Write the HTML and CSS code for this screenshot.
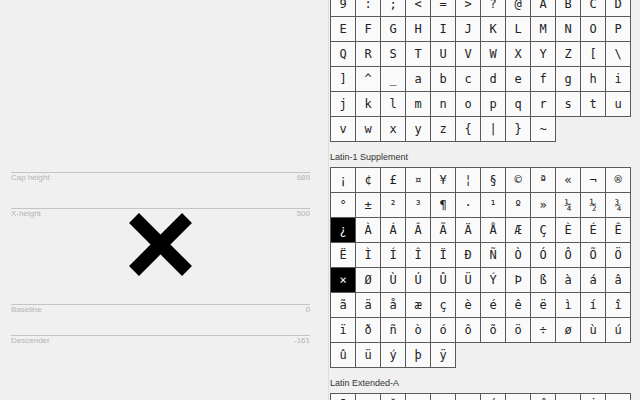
FILE: index.html
```html
<!DOCTYPE html>
<html>
<head>
<meta charset="utf-8">
<link rel="stylesheet" href="styles.css">
</head>
<body>
<div class="app">
  <div class="preview">
    <div class="metric cap"><span>Cap height</span><span>689</span></div>
    <div class="metric xh"><span>X-height</span><span>500</span></div>
    <div class="metric base"><span>Baseline</span><span>0</span></div>
    <div class="metric desc"><span>Descender</span><span>-161</span></div>
    <svg class="glyph" width="63" height="63" viewBox="0 0 63 63">
      <line x1="5" y1="5" x2="58" y2="58" stroke="#000" stroke-width="14"/>
      <line x1="58" y1="5" x2="5" y2="58" stroke="#000" stroke-width="14"/>
    </svg>
  </div>
  <div class="charset">
    <div class="grid first">
      <div class="c">9</div><div class="c">:</div><div class="c">;</div><div class="c">&lt;</div><div class="c">=</div><div class="c">&gt;</div><div class="c">?</div><div class="c">@</div><div class="c">A</div><div class="c">B</div><div class="c">C</div><div class="c">D</div>
      <div class="c">E</div><div class="c">F</div><div class="c">G</div><div class="c">H</div><div class="c">I</div><div class="c">J</div><div class="c">K</div><div class="c">L</div><div class="c">M</div><div class="c">N</div><div class="c">O</div><div class="c">P</div>
      <div class="c">Q</div><div class="c">R</div><div class="c">S</div><div class="c">T</div><div class="c">U</div><div class="c">V</div><div class="c">W</div><div class="c">X</div><div class="c">Y</div><div class="c">Z</div><div class="c">[</div><div class="c">\</div>
      <div class="c">]</div><div class="c">^</div><div class="c">_</div><div class="c">a</div><div class="c">b</div><div class="c">c</div><div class="c">d</div><div class="c">e</div><div class="c">f</div><div class="c">g</div><div class="c">h</div><div class="c">i</div>
      <div class="c">j</div><div class="c">k</div><div class="c">l</div><div class="c">m</div><div class="c">n</div><div class="c">o</div><div class="c">p</div><div class="c">q</div><div class="c">r</div><div class="c">s</div><div class="c">t</div><div class="c">u</div>
      <div class="c">v</div><div class="c">w</div><div class="c">x</div><div class="c">y</div><div class="c">z</div><div class="c">{</div><div class="c">|</div><div class="c">}</div><div class="c">~</div>
    </div>
    <div class="label">Latin-1 Supplement</div>
    <div class="grid">
      <div class="c">¡</div><div class="c">¢</div><div class="c">£</div><div class="c">¤</div><div class="c">¥</div><div class="c">¦</div><div class="c">§</div><div class="c">©</div><div class="c">ª</div><div class="c">«</div><div class="c">¬</div><div class="c">®</div>
      <div class="c">°</div><div class="c">±</div><div class="c">²</div><div class="c">³</div><div class="c">¶</div><div class="c">·</div><div class="c">¹</div><div class="c">º</div><div class="c">»</div><div class="c">¼</div><div class="c">½</div><div class="c">¾</div>
      <div class="c sel">¿</div><div class="c">À</div><div class="c">Á</div><div class="c">Â</div><div class="c">Ã</div><div class="c">Ä</div><div class="c">Å</div><div class="c">Æ</div><div class="c">Ç</div><div class="c">È</div><div class="c">É</div><div class="c">Ê</div>
      <div class="c">Ë</div><div class="c">Ì</div><div class="c">Í</div><div class="c">Î</div><div class="c">Ï</div><div class="c">Ð</div><div class="c">Ñ</div><div class="c">Ò</div><div class="c">Ó</div><div class="c">Ô</div><div class="c">Õ</div><div class="c">Ö</div>
      <div class="c sel">×</div><div class="c">Ø</div><div class="c">Ù</div><div class="c">Ú</div><div class="c">Û</div><div class="c">Ü</div><div class="c">Ý</div><div class="c">Þ</div><div class="c">ß</div><div class="c">à</div><div class="c">á</div><div class="c">â</div>
      <div class="c">ã</div><div class="c">ä</div><div class="c">å</div><div class="c">æ</div><div class="c">ç</div><div class="c">è</div><div class="c">é</div><div class="c">ê</div><div class="c">ë</div><div class="c">ì</div><div class="c">í</div><div class="c">î</div>
      <div class="c">ï</div><div class="c">ð</div><div class="c">ñ</div><div class="c">ò</div><div class="c">ó</div><div class="c">ô</div><div class="c">õ</div><div class="c">ö</div><div class="c">÷</div><div class="c">ø</div><div class="c">ù</div><div class="c">ú</div>
      <div class="c">û</div><div class="c">ü</div><div class="c">ý</div><div class="c">þ</div><div class="c">ÿ</div>
    </div>
    <div class="label">Latin Extended-A</div>
    <div class="grid">
      <div class="c">Ā</div><div class="c">ā</div><div class="c">Ă</div><div class="c">ă</div><div class="c">Ą</div><div class="c">ą</div><div class="c">Ć</div><div class="c">ć</div><div class="c">Ĉ</div><div class="c">ĉ</div><div class="c">Ċ</div><div class="c">ċ</div>
    </div>
  </div>
</div>
</body>
</html>
```
FILE: styles.css
```css
html, body {
  margin: 0;
  padding: 0;
  background: #f0f0f0;
  overflow: hidden;
}
.app {
  display: flex;
  width: 640px;
  height: 400px;
  overflow: hidden;
}
.preview {
  position: relative;
  width: 299px;
  flex: none;
  padding: 172px 18px 0 11px;
  border-right: 1px solid #dedede;
  font-family: "Liberation Sans", Arial, sans-serif;
  font-size: 8px;
  color: #b4b4b4;
}
.metric {
  display: flex;
  justify-content: space-between;
  border-top: 1px solid #c4c4c4;
  line-height: 10px;
  box-sizing: border-box;
}
.cap { height: 36px; }
.xh { height: 96px; }
.base { height: 31px; }
.desc { height: 20px; }
.glyph {
  position: absolute;
  left: 129px;
  top: 213px;
}
.charset {
  flex: none;
  padding-left: 1px;
  margin-top: -9px;
}
.grid {
  display: grid;
  grid-template-columns: repeat(12, 25px);
  width: max-content;
  border-top: 1px solid #5a5a5a;
  border-left: 1px solid #5a5a5a;
}
.c {
  height: 24px;
  border-right: 1px solid #5a5a5a;
  border-bottom: 1px solid #5a5a5a;
  background: #fafafa;
  display: flex;
  align-items: center;
  justify-content: center;
  font-family: "DejaVu Sans Mono", "Liberation Mono", monospace;
  font-size: 12px;
  color: #222;
}
.c.sel {
  background: #000;
  color: #fff;
}
.label {
  font-family: "Liberation Sans", Arial, sans-serif;
  font-size: 9px;
  color: #333;
  line-height: 12px;
  margin: 9px 0 4px;
}
```
